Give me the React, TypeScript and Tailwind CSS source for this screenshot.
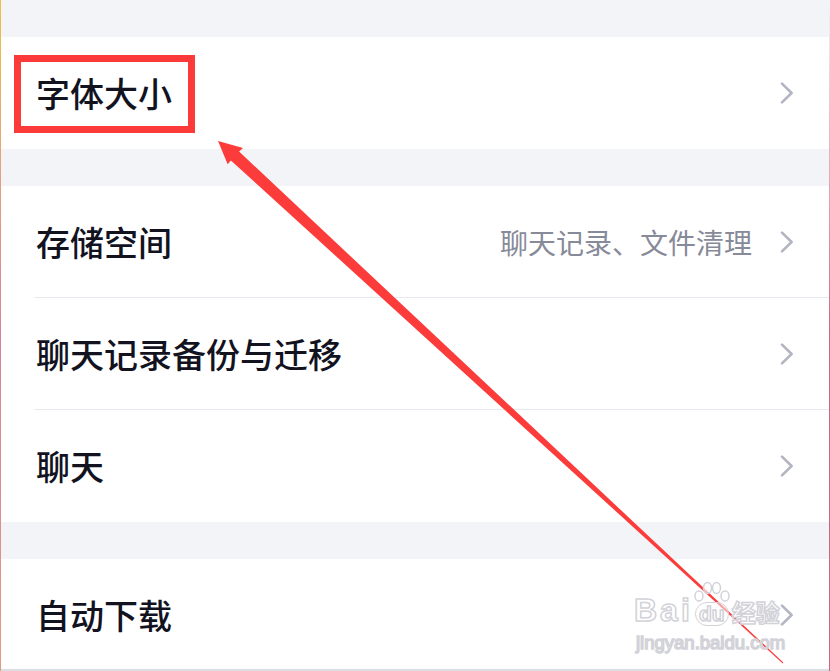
import React from "react";

type RowProps = { label: string; value?: string; divider?: boolean };

// grey right-pointing chevron used on every settings row
function Chevron() {
  return (
    <svg width="14" height="22" viewBox="0 0 14 22" className="shrink-0">
      <polyline
        points="2,1.6 11.6,11 2,20.4"
        fill="none"
        stroke="#b3b5c3"
        strokeWidth="2.6"
        strokeLinecap="round"
        strokeLinejoin="round"
      />
    </svg>
  );
}

function Row({ label, value, divider }: RowProps) {
  return (
    <div className="h-[112px] shrink-0 bg-white pl-[33px]">
      <div
        className={`flex h-full items-center pr-[35px] ${
          divider ? "border-b border-[#e8e9ef]" : ""
        }`}
      >
        <span className="flex-1 pl-[2px] text-[34px] font-medium leading-none text-[#12131f]">
          {label}
        </span>
        {value && (
          <span className="mr-[28px] text-[28px] leading-none text-[#878a99]">{value}</span>
        )}
        <Chevron />
      </div>
    </div>
  );
}

function Gap() {
  return <div className="h-[37px] shrink-0 bg-[#f3f4f8]" />;
}

// faint hollow "Baidu 经验" watermark in the bottom right corner
function Watermark() {
  const hollow =
    "text-white/70 [-webkit-text-stroke:1.5px_#d2d2d8] font-['Liberation_Sans','Noto_Sans_CJK_SC',sans-serif]";
  return (
    <div className="pointer-events-none absolute left-[634px] top-[582px] flex flex-col">
      <div className="flex items-end">
        <span className={`${hollow} text-[32px] font-bold leading-none tracking-[3px]`}>Bai</span>
        <div className="relative flex h-[44px] w-[38px] items-end justify-center">
          <svg width="38" height="22" viewBox="0 0 38 22" className="absolute left-0 top-0">
            <g fill="rgba(255,255,255,0.6)" stroke="#d2d2d8" strokeWidth="1.5">
              <ellipse cx="6" cy="14" rx="4" ry="5" />
              <ellipse cx="14.5" cy="6" rx="4" ry="5.5" />
              <ellipse cx="23.5" cy="6" rx="4" ry="5.5" />
              <ellipse cx="32" cy="14" rx="4" ry="5" />
            </g>
          </svg>
          <span
            className={`${hollow} rounded-[12px] border-[1.5px] border-[#d2d2d8] bg-white/50 px-[3px] text-[21px] font-bold leading-[22px]`}
          >
            du
          </span>
        </div>
        <span className={`${hollow} ml-[1px] text-[24px] font-bold leading-none`}>经验</span>
      </div>
      <span className={`${hollow} mt-[8px] pl-[2px] text-[18.5px] leading-none`}>
        jingyan.baidu.com
      </span>
    </div>
  );
}

// red annotation arrow: tapered shaft from bottom right to the box
function Arrow() {
  return (
    <svg
      width="830"
      height="671"
      viewBox="0 0 830 671"
      className="pointer-events-none absolute left-0 top-0"
    >
      <polygon
        points="218,141 243,148 239.1,151.6 783.3,662.6 782.7,663.4 230.9,160.4 227.7,164.3"
        fill="#fc3b3b"
      />
    </svg>
  );
}

export default function App() {
  return (
    <div className="relative flex h-[671px] w-[830px] overflow-hidden bg-[#f3f4f8] font-['Noto_Sans_CJK_SC',sans-serif]">
      <div className="w-px shrink-0 bg-gradient-to-b from-[#f0c040] via-[#d9829a] to-[#e39a84]" />
      <div className="flex flex-1 flex-col overflow-hidden border-b-2 border-[#dedee2]">
        <Gap />
        <Row label="字体大小" />
        <Gap />
        <Row label="存储空间" value="聊天记录、文件清理" divider />
        <Row label="聊天记录备份与迁移" divider />
        <Row label="聊天" />
        <Gap />
        <Row label="自动下载" />
      </div>
      <div className="w-px shrink-0 bg-gradient-to-b from-[#f3f4f8] via-[#c8668a] to-[#c8668a]" />

      <div className="pointer-events-none absolute left-[14px] top-[55px] h-[78px] w-[181px] border-[7px] border-[#fd3a3a]" />
      <Arrow />
      <Watermark />
    </div>
  );
}
